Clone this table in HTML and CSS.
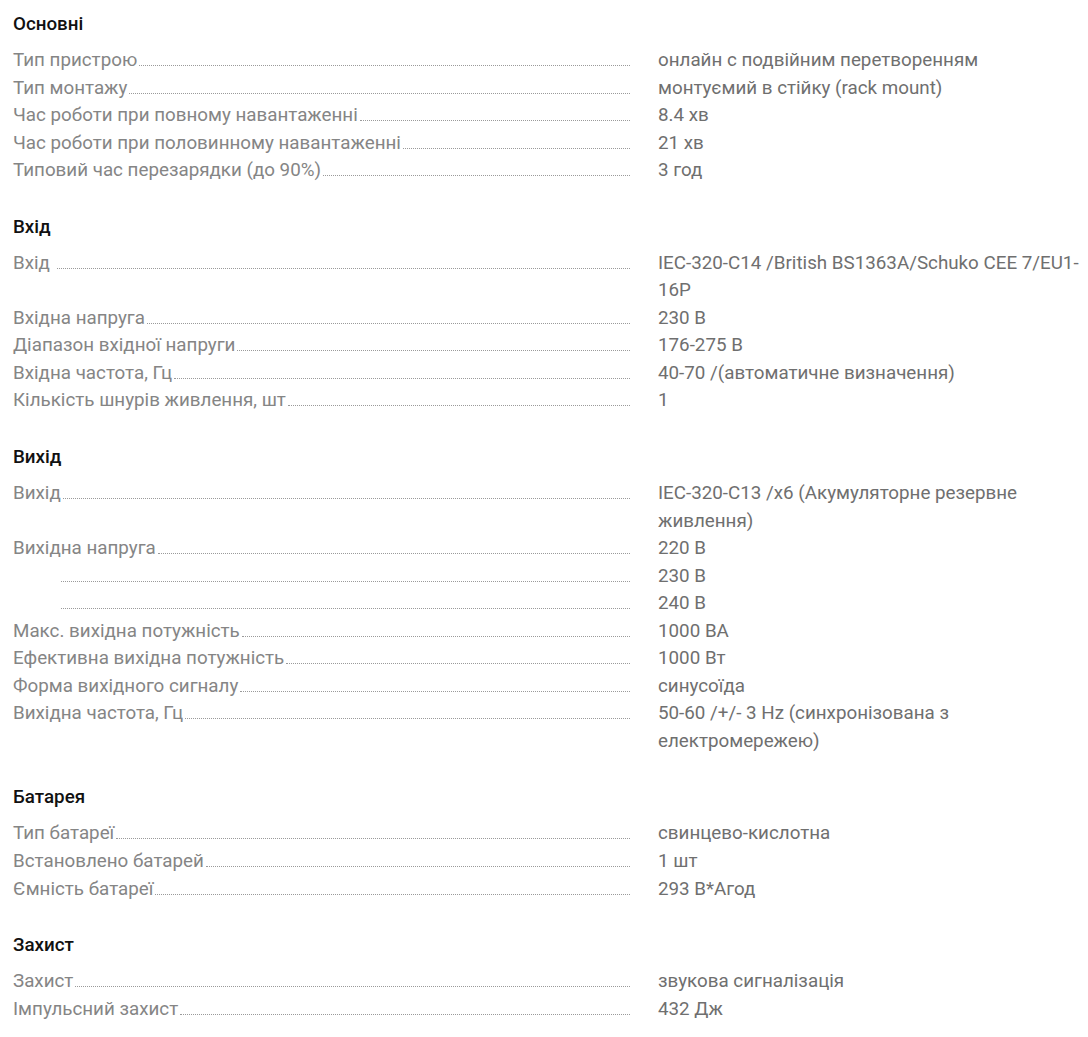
FILE: index.html
```html
<!DOCTYPE html>
<html lang="uk">
<head>
<meta charset="utf-8">
<link rel="stylesheet" href="styles.css">
</head>
<body>
<div class="specs">
  <section class="group">
    <h3 class="group-title">Основні</h3>
    <div class="row"><div class="label"><span>Тип пристрою</span><i class="dots"></i></div><div class="value">онлайн с подвійним перетворенням</div></div>
    <div class="row"><div class="label"><span>Тип монтажу</span><i class="dots"></i></div><div class="value">монтуємий в стійку (rack mount)</div></div>
    <div class="row"><div class="label"><span>Час роботи при повному навантаженні</span><i class="dots"></i></div><div class="value">8.4 хв</div></div>
    <div class="row"><div class="label"><span>Час роботи при половинному навантаженні</span><i class="dots"></i></div><div class="value">21 хв</div></div>
    <div class="row"><div class="label"><span>Типовий час перезарядки (до 90%)</span><i class="dots"></i></div><div class="value">3 год</div></div>
  </section>
  <section class="group">
    <h3 class="group-title">Вхід</h3>
    <div class="row"><div class="label"><span>Вхід&nbsp;</span><i class="dots"></i></div><div class="value">IEC-320-C14 /British BS1363A/Schuko CEE 7/EU1-16P</div></div>
    <div class="row"><div class="label"><span>Вхідна напруга</span><i class="dots"></i></div><div class="value">230 В</div></div>
    <div class="row"><div class="label"><span>Діапазон вхідної напруги</span><i class="dots"></i></div><div class="value">176-275 В</div></div>
    <div class="row"><div class="label"><span>Вхідна частота, Гц</span><i class="dots"></i></div><div class="value">40-70 /(автоматичне визначення)</div></div>
    <div class="row"><div class="label"><span>Кількість шнурів живлення, шт</span><i class="dots"></i></div><div class="value">1</div></div>
  </section>
  <section class="group">
    <h3 class="group-title">Вихід</h3>
    <div class="row"><div class="label"><span>Вихід</span><i class="dots"></i></div><div class="value">IEC-320-C13 /x6 (Акумуляторне резервне живлення)</div></div>
    <div class="row"><div class="label"><span>Вихідна напруга</span><i class="dots"></i></div><div class="value">220 В</div></div>
    <div class="row"><div class="label"><span class="blank">&nbsp;</span><i class="dots"></i></div><div class="value">230 В</div></div>
    <div class="row"><div class="label"><span class="blank">&nbsp;</span><i class="dots"></i></div><div class="value">240 В</div></div>
    <div class="row"><div class="label"><span>Макс. вихідна потужність</span><i class="dots"></i></div><div class="value">1000 ВА</div></div>
    <div class="row"><div class="label"><span>Ефективна вихідна потужність</span><i class="dots"></i></div><div class="value">1000 Вт</div></div>
    <div class="row"><div class="label"><span>Форма вихідного сигналу</span><i class="dots"></i></div><div class="value">синусоїда</div></div>
    <div class="row"><div class="label"><span>Вихідна частота, Гц</span><i class="dots"></i></div><div class="value">50-60 /+/- 3 Hz (синхронізована з електромережею)</div></div>
  </section>
  <section class="group">
    <h3 class="group-title">Батарея</h3>
    <div class="row"><div class="label"><span>Тип батареї</span><i class="dots"></i></div><div class="value">свинцево-кислотна</div></div>
    <div class="row"><div class="label"><span>Встановлено батарей</span><i class="dots"></i></div><div class="value">1 шт</div></div>
    <div class="row"><div class="label"><span>Ємність батареї</span><i class="dots"></i></div><div class="value">293 В*Агод</div></div>
  </section>
  <section class="group">
    <h3 class="group-title">Захист</h3>
    <div class="row"><div class="label"><span>Захист</span><i class="dots"></i></div><div class="value">звукова сигналізація</div></div>
    <div class="row"><div class="label"><span>Імпульсний захист</span><i class="dots"></i></div><div class="value">432 Дж</div></div>
  </section>
</div>
</body>
</html>
```
FILE: styles.css
```css
html, body {
  margin: 0;
  padding: 0;
  background: #fff;
}
body {
  font-family: Roboto, "Liberation Sans", Arial, sans-serif;
  font-size: 18.8px;
}
.specs {
  padding: 10px 8px 20px 13px;
  display: flex;
  flex-direction: column;
  gap: 28px;
}
.group {
  display: flex;
  flex-direction: column;
}
.group-title {
  margin: 0 0 9px;
  font-size: 18.8px;
  font-weight: 500;
  line-height: 28px;
  color: #111;
}
.row {
  display: grid;
  grid-template-columns: 617px 1fr;
  column-gap: 28px;
  line-height: 27.55px;
}
.label {
  display: flex;
  align-items: baseline;
  color: #858585;
  white-space: nowrap;
}
.blank {
  display: inline-block;
  width: 46px;
}
.dots {
  flex: 1;
  margin-left: 2px;
  border-bottom: 1px dotted #9a9a9a;
}
.value {
  color: #6f6f6f;
}
```
